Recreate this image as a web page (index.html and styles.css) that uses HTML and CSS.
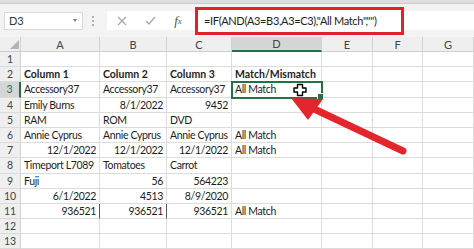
FILE: index.html
```html
<!DOCTYPE html>
<html lang="en">
<head>
<meta charset="utf-8">
<title>Match/Mismatch</title>
<link rel="stylesheet" href="styles.css">
</head>
<body>
<div class="sheet">
  <div class="ribbon-edge"></div>
  <div class="toolbar">
    <div class="namebox"><span>D3</span><span class="caret"></span></div>
    <div class="grip"><i></i><i></i><i></i></div>
    <div class="formula">
      <span class="fbtn">
        <svg width="10" height="10" viewBox="0 0 10 10"><path d="M1 1 L9 9 M9 1 L1 9" stroke="#a6a6a6" stroke-width="1.2" fill="none"/></svg>
      </span>
      <span class="fbtn">
        <svg width="11" height="9" viewBox="0 0 11 9"><path d="M1 5 L4 8 L10 1" stroke="#a6a6a6" stroke-width="1.2" fill="none"/></svg>
      </span>
      <span class="fbtn fx">f<sub>x</sub></span>
      <div class="input">=IF(AND(A3=B3,A3=C3),"All Match","")</div>
    </div>
  </div>

  <div class="grid">
    <div class="h corner"><svg width="9" height="9" viewBox="0 0 9 9"><path d="M0 9 L9 0 L9 9 Z" fill="#b4b4b4"/></svg></div>
    <div class="h">A</div><div class="h">B</div><div class="h">C</div><div class="h on">D</div><div class="h">E</div><div class="h">F</div><div class="h">G</div>

    <div class="r">1</div><div class="c"></div><div class="c"></div><div class="c"></div><div class="c"></div><div class="c"></div><div class="c"></div><div class="c"></div>

    <div class="r">2</div><div class="c b">Column 1</div><div class="c b">Column 2</div><div class="c b">Column 3</div><div class="c b">Match/Mismatch</div><div class="c"></div><div class="c"></div><div class="c"></div>

    <div class="r on">3</div><div class="c">Accessory37</div><div class="c">Accessory37</div><div class="c">Accessory37</div><div class="c sel">All Match</div><div class="c"></div><div class="c"></div><div class="c"></div>

    <div class="r">4</div><div class="c">Emily Burns</div><div class="c n">8/1/2022</div><div class="c n">9452</div><div class="c"></div><div class="c"></div><div class="c"></div><div class="c"></div>

    <div class="r">5</div><div class="c">RAM</div><div class="c">ROM</div><div class="c">DVD</div><div class="c"></div><div class="c"></div><div class="c"></div><div class="c"></div>

    <div class="r">6</div><div class="c">Annie Cyprus</div><div class="c">Annie Cyprus</div><div class="c">Annie Cyprus</div><div class="c">All Match</div><div class="c"></div><div class="c"></div><div class="c"></div>

    <div class="r">7</div><div class="c n">12/1/2022</div><div class="c n">12/1/2022</div><div class="c n">12/1/2022</div><div class="c">All Match</div><div class="c"></div><div class="c"></div><div class="c"></div>

    <div class="r">8</div><div class="c">Timeport L7089</div><div class="c">Tomatoes</div><div class="c">Carrot</div><div class="c"></div><div class="c"></div><div class="c"></div><div class="c"></div>

    <div class="r">9</div><div class="c">Fuji</div><div class="c n">56</div><div class="c n">564223</div><div class="c"></div><div class="c"></div><div class="c"></div><div class="c"></div>

    <div class="r">10</div><div class="c n">6/1/2022</div><div class="c n">4513</div><div class="c n">8/9/2020</div><div class="c"></div><div class="c"></div><div class="c"></div><div class="c"></div>

    <div class="r">11</div><div class="c n edge">936521</div><div class="c n edge">936521</div><div class="c n">936521</div><div class="c">All Match</div><div class="c"></div><div class="c"></div><div class="c"></div>

    <div class="r">12</div><div class="c"></div><div class="c"></div><div class="c"></div><div class="c"></div><div class="c"></div><div class="c"></div><div class="c"></div>

    <div class="r">13</div><div class="c"></div><div class="c"></div><div class="c"></div><div class="c"></div><div class="c"></div><div class="c"></div><div class="c"></div>
  </div>

  <!-- callout arrow and the cell cursor float over the grid -->
  <svg class="overlay" width="474" height="249" viewBox="0 0 474 249">
    <line x1="403" y1="151" x2="312" y2="108" stroke="#e3262c" stroke-width="7" stroke-linecap="round"/>
    <polygon points="291,98 323,99 308,120" fill="#e3262c"/>
    <path d="M297.5,84.5 h5 v3.5 h3.5 v4 h-3.5 v3.5 h-5 v-3.5 h-3.5 v-4 h3.5 z" fill="#fff" stroke="#000" stroke-width="1.4" stroke-linejoin="round"/>
  </svg>
</div>
</body>
</html>
```

FILE: styles.css
```css
* { box-sizing: border-box; }

html, body {
  margin: 0;
  padding: 0;
  background: #fff;
}

.sheet {
  position: relative;
  width: 474px;
  height: 249px;
  overflow: hidden;
  font-family: Lato, "Liberation Sans", sans-serif;
  color: #1d1d1d;
}

.ribbon-edge {
  height: 4px;
  background: #dedede;
  border-bottom: 1px solid #cdcdcd;
}

/* name box + formula bar */
.toolbar {
  height: 33px;
  display: flex;
  align-items: center;
  background: #f3f3f3;
  padding-left: 4px;
}

.namebox {
  width: 79px;
  height: 18px;
  background: #fff;
  border: 1px solid #dadada;
  display: flex;
  align-items: center;
  justify-content: space-between;
  padding: 0 5px 0 4px;
  font-size: 11px;
  color: #333;
}

.caret {
  width: 0;
  height: 0;
  border-left: 2.5px solid transparent;
  border-right: 2.5px solid transparent;
  border-top: 3px solid #7a7a7a;
}

.grip {
  width: 24px;
  display: flex;
  flex-direction: column;
  align-items: center;
  gap: 2px;
  padding-right: 4px;
}

.grip i {
  width: 2px;
  height: 2px;
  background: #b0b0b0;
}

.formula {
  flex: 1;
  height: 19px;
  background: #fff;
  display: flex;
  align-items: center;
  padding-left: 1px;
}

.fbtn {
  width: 28px;
  display: flex;
  justify-content: center;
  align-items: center;
}

.fx {
  font-family: "Liberation Serif", serif;
  font-style: italic;
  font-size: 13px;
  color: #555;
}

.fx sub {
  font-size: 9px;
  vertical-align: -1px;
}

.input {
  margin-left: 3px;
  width: 209px;
  height: 28px;
  flex: none;
  border: 3px solid #e0222a;
  background: #fff;
  display: flex;
  align-items: center;
  padding-left: 6px;
  font-size: 11px;
  letter-spacing: -0.35px;
  color: #1d1d1d;
  white-space: nowrap;
}

/* worksheet grid */
.grid {
  display: grid;
  grid-template-columns: 21px 79px 67px 65px 90px 51px 50px 51px;
  grid-template-rows: 15px repeat(13, 15.2px);
}

.h, .r {
  background: #efefef;
  color: #444;
  font-size: 11px;
  display: flex;
  align-items: center;
  justify-content: center;
  border-right: 1px solid #d2d2d2;
  border-bottom: 1px solid #cfcfcf;
}

.h.corner {
  justify-content: flex-end;
  align-items: flex-end;
  padding: 0 1px 2px 0;
}

.h.on {
  background: #d6d6d6;
  border-bottom: 2px solid #217346;
}

.r {
  font-size: 10.5px;
  border-bottom-color: #dadada;
}

.r.on {
  background: #d6d6d6;
  color: #217346;
  border-right: 2px solid #217346;
}

.c {
  font-size: 10.5px;
  letter-spacing: -0.35px;
  display: flex;
  align-items: center;
  padding: 0 3px;
  white-space: nowrap;
  border-right: 1px solid #dcdcdc;
  border-bottom: 1px solid #dcdcdc;
}

.c.b {
  font-weight: 700;
  letter-spacing: 0;
}

.c.n { justify-content: flex-end; padding-right: 3px; }

.c.edge { border-right-color: #5a5a5a; }

.c.sel {
  position: relative;
  outline: 2px solid #217346;
  outline-offset: -1px;
  z-index: 1;
}

.c.sel::after {
  content: "";
  position: absolute;
  right: -3px;
  bottom: -3px;
  width: 5px;
  height: 5px;
  background: #217346;
  border: 1px solid #fff;
}

.overlay {
  position: absolute;
  left: 0;
  top: 0;
  pointer-events: none;
  z-index: 2;
}
```
